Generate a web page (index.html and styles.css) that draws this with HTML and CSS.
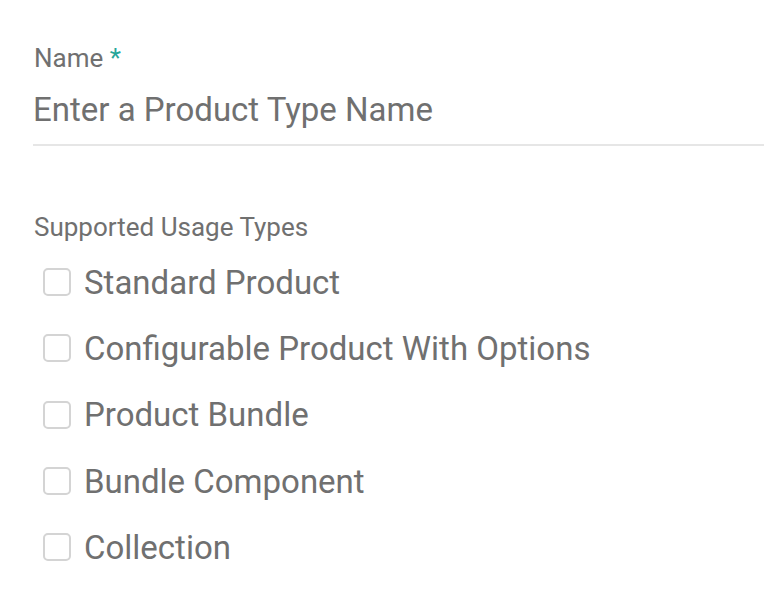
FILE: index.html
```html
<!DOCTYPE html>
<html>
<head>
<meta charset="utf-8">
<link rel="stylesheet" href="styles.css">
</head>
<body>
<div class="form">
  <div class="field">
    <label class="field-label">Name <span class="req">*</span></label>
    <div class="input">Enter a Product Type Name</div>
  </div>
  <div class="group">
    <div class="group-label">Supported Usage Types</div>
    <ul class="options">
      <li class="option"><span class="box"></span><span class="opt-text">Standard Product</span></li>
      <li class="option"><span class="box"></span><span class="opt-text">Configurable Product With Options</span></li>
      <li class="option"><span class="box"></span><span class="opt-text">Product Bundle</span></li>
      <li class="option"><span class="box"></span><span class="opt-text">Bundle Component</span></li>
      <li class="option"><span class="box"></span><span class="opt-text">Collection</span></li>
    </ul>
  </div>
</div>
</body>
</html>
```

FILE: styles.css
```css
html, body {
  margin: 0;
  padding: 0;
  background: #ffffff;
}
body {
  font-family: Roboto, "Liberation Sans", sans-serif;
  color: #707070;
}
.form {
  padding: 40px 0 0 34px;
}
.field-label {
  display: block;
  font-size: 26px;
  line-height: 36px;
}
.req {
  color: #26a69a;
}
.input {
  font-size: 33px;
  line-height: 52px;
  padding-top: 8px;
  padding-bottom: 8px;
  border-bottom: 2px solid #e6e6e6;
  margin-left: -1px;
}
.group {
  padding-top: 64px;
}
.group-label {
  font-size: 26px;
  line-height: 34px;
  margin-bottom: 5px;
}
.options {
  list-style: none;
  margin: 0;
  padding: 0 0 0 9px;
}
.option {
  display: flex;
  align-items: center;
  gap: 13px;
  height: 66.3px;
}
.box {
  width: 24px;
  height: 24px;
  border: 2px solid #d4d4d4;
  border-radius: 5px;
  flex: none;
}
.opt-text {
  font-size: 33px;
}
```
